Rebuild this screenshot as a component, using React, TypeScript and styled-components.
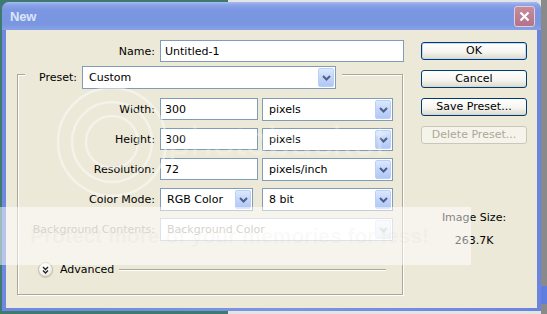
import React from 'react';
import styled, { createGlobalStyle, css } from 'styled-components';

const GlobalStyle = createGlobalStyle`
  html, body {
    margin: 0;
    padding: 0;
    width: 547px;
    height: 314px;
    overflow: hidden;
  }
  body {
    font-family: "DejaVu Sans", Tahoma, sans-serif;
    font-size: 11px;
    color: #000;
  }
`;

const Desktop = styled.div`
  position: relative;
  width: 547px;
  height: 314px;
  box-sizing: border-box;
  padding: 2px 0 0 2px;
  background:
    linear-gradient(180deg, transparent 0, transparent 286px, #5f7ee0 286px, #5f7ee0 304px, transparent 304px) right / 6px 100% no-repeat,
    linear-gradient(90deg, #3e7a70 0, #3e7a70 228px, #e4e4e4 228px, #e4e4e4 541px, #8a8a8a 541px);
`;

const Window = styled.div`
  width: 539px;
  height: 309px;
  box-sizing: border-box;
  display: flex;
  flex-direction: column;
  padding: 0 4px 3px 4px;
  border-radius: 7px 7px 0 0;
  background: linear-gradient(90deg, #6f88e0, #7c95e2 50%, #6a84df);
`;

const TitleBar = styled.div`
  height: 28px;
  display: flex;
  align-items: center;
  justify-content: space-between;
  margin: 0 -4px;
  padding: 0 6px 0 8px;
  border-radius: 7px 7px 0 0;
  background: linear-gradient(180deg, #a6bcf0 0, #8aa3e8 3px, #7b96e2 8px, #7a96e0 22px, #86a1e6 28px);
`;

const Title = styled.span`
  font-family: "Liberation Sans", Arial, sans-serif;
  font-weight: bold;
  font-size: 13px;
  color: #dbe5f9;
  letter-spacing: -0.2px;
`;

const CloseButton = styled.div`
  width: 21px;
  height: 21px;
  box-sizing: border-box;
  border: 1px solid #e6cdd6;
  border-radius: 3px;
  background: linear-gradient(180deg, #c68d9c, #b1738a);
  display: flex;
  align-items: center;
  justify-content: center;
  margin-top: 1px;
`;

const Body = styled.div`
  flex: 1;
  display: flex;
  gap: 17px;
  padding: 10px 0 0 11px;
  background: #ece9d8;
`;

const Main = styled.div`
  width: 387px;
  display: flex;
  flex-direction: column;
`;

const NameRow = styled.div`
  display: grid;
  grid-template-columns: 138px 244px;
  column-gap: 5px;
  align-items: center;
`;

const Label = styled.label<{ $disabled?: boolean }>`
  text-align: right;
  white-space: nowrap;
  color: ${(p) => (p.$disabled ? '#aca899' : '#000')};
`;

const TextInput = styled.input<{ $w: number }>`
  width: ${(p) => p.$w}px;
  height: 22px;
  box-sizing: border-box;
  margin: 0;
  padding: 0 4px;
  border: 1px solid #7f9db9;
  background: #fff;
  font-family: "DejaVu Sans", Tahoma, sans-serif;
  font-size: 11px;
  color: #000;
  outline: none;
`;

const Group = styled.fieldset`
  width: 386px;
  box-sizing: border-box;
  margin: 4px 0 0 0;
  padding: 0;
  border: 1px solid #aca899;
  box-shadow: inset 1px 1px 0 #fff, 1px 1px 0 #fff;
  min-width: 0;
`;

const Legend = styled.legend`
  height: 16px;
  margin-left: 7px;
  padding: 0 6px 0 14px;
  background: #ece9d8;
`;

const LegendInner = styled.div`
  height: 23px;
  display: flex;
  align-items: center;
  gap: 5px;
`;

const FormGrid = styled.div`
  display: grid;
  grid-template-columns: 142px 102px 131px;
  grid-auto-rows: 23px;
  row-gap: 7px;
  margin-top: 16px;
  align-items: start;

  & > ${Label} {
    padding-right: 5px;
    line-height: 23px;
  }
`;

const ComboBox = styled.div<{ $w: number; $disabled?: boolean; $span?: boolean }>`
  width: ${(p) => p.$w}px;
  height: 23px;
  box-sizing: border-box;
  display: flex;
  align-items: center;
  padding: 1px;
  background: #fff;
  border: 1px solid ${(p) => (p.$disabled ? '#b9c7da' : '#7f9db9')};
  color: ${(p) => (p.$disabled ? '#aca899' : '#000')};
  ${(p) =>
    p.$span &&
    css`
      grid-column: span 2;
    `}
`;

const ComboText = styled.span`
  flex: 1;
  padding-left: 5px;
  white-space: nowrap;
  overflow: hidden;
`;

const DropButton = styled.div<{ $disabled?: boolean }>`
  width: 16px;
  height: 19px;
  box-sizing: border-box;
  border: 1px solid ${(p) => (p.$disabled ? '#e4e9f2' : '#bcd0f6')};
  border-radius: 2px;
  display: flex;
  align-items: center;
  justify-content: center;
  background: ${(p) =>
    p.$disabled
      ? 'linear-gradient(180deg, #f4f6fb, #e6ebf5)'
      : 'linear-gradient(180deg, #dce8fe 0%, #c3d5fb 50%, #b1c7f6 100%)'};
`;

const AdvancedRow = styled.div`
  display: flex;
  align-items: center;
  margin-top: 21px;
  padding: 0 16px 17px 20px;
`;

const RoundButton = styled.div`
  width: 15px;
  height: 15px;
  box-sizing: border-box;
  border-radius: 50%;
  border: 1px solid #c2bfb2;
  background: radial-gradient(circle at 40% 35%, #fff 0, #f6f5f0 50%, #d9d6ca 100%);
  box-shadow: 0 1px 1px rgba(0, 0, 0, 0.15);
  display: flex;
  align-items: center;
  justify-content: center;
`;

const AdvancedText = styled.span`
  margin-left: 7px;
`;

const Rule = styled.div`
  flex: 1;
  margin-left: 5px;
  height: 0;
  border-top: 1px solid #aca899;
  border-bottom: 1px solid #fff;
`;

const Side = styled.div`
  width: 106px;
  display: flex;
  flex-direction: column;
  padding-top: 2px;
`;

const ButtonStack = styled.div`
  display: flex;
  flex-direction: column;
  gap: 10px;
`;

const PushButton = styled.button<{ $primary?: boolean }>`
  width: 106px;
  height: 18px;
  box-sizing: border-box;
  margin: 0;
  padding: 0;
  border: 1px solid #003c74;
  border-radius: 3px;
  background: linear-gradient(180deg, #ffffff 0%, #f6f5f0 55%, #e3e0d4 90%, #d6d0c5 100%);
  font-family: "DejaVu Sans", Tahoma, sans-serif;
  font-size: 11px;
  line-height: 16px;
  color: #000;
  ${(p) =>
    p.$primary &&
    css`
      box-shadow: inset 0 0 0 1px #c6d6f5;
    `}

  &:disabled {
    border-color: #c9c7ba;
    color: #aca899;
    background: #f5f4ea;
  }
`;

const SizeInfo = styled.div`
  margin-top: 67px;
  display: flex;
  flex-direction: column;
  align-items: center;
  gap: 10px;
  line-height: 13px;
`;

/* photobucket watermark baked into the screenshot */
const WatermarkBand = styled.div`
  position: absolute;
  left: 0;
  top: 207px;
  width: 471px;
  height: 58px;
  background: rgba(255, 255, 255, 0.5);
  pointer-events: none;
`;

const WatermarkSlogan = styled.div`
  position: absolute;
  left: 30px;
  top: 224px;
  font-family: "Liberation Sans", Arial, sans-serif;
  font-weight: bold;
  font-size: 21px;
  line-height: 24px;
  color: rgba(200, 194, 170, 0.09);
  white-space: nowrap;
  pointer-events: none;
`;

const WatermarkLogo = styled.div`
  position: absolute;
  left: 168px;
  top: 120px;
  font-family: "Liberation Sans", Arial, sans-serif;
  font-size: 40px;
  line-height: 42px;
  color: rgba(255, 255, 255, 0.25);
  white-space: nowrap;
  pointer-events: none;
`;

const WatermarkRings = styled.svg`
  position: absolute;
  left: 50px;
  top: 80px;
  pointer-events: none;
`;

const Chevron = ({ disabled }: { disabled?: boolean }) => (
  <svg width="9" height="6" viewBox="0 0 9 6">
    <polyline
      points="1,1 4.5,4.5 8,1"
      fill="none"
      stroke={disabled ? '#c6cedd' : '#4d6185'}
      strokeWidth="2"
    />
  </svg>
);

const Combo = ({
  value,
  width,
  disabled,
  span,
}: {
  value: string;
  width: number;
  disabled?: boolean;
  span?: boolean;
}) => (
  <ComboBox $w={width} $disabled={disabled} $span={span}>
    <ComboText>{value}</ComboText>
    <DropButton $disabled={disabled}>
      <Chevron disabled={disabled} />
    </DropButton>
  </ComboBox>
);

export default function App() {
  return (
    <Desktop>
      <GlobalStyle />
      <Window>
        <TitleBar>
          <Title>New</Title>
          <CloseButton>
            <svg width="11" height="11" viewBox="0 0 11 11">
              <path d="M1.5 1.5 L9.5 9.5 M9.5 1.5 L1.5 9.5" stroke="#fff" strokeWidth="2.2" />
            </svg>
          </CloseButton>
        </TitleBar>
        <Body>
          <Main>
            <NameRow>
              <Label>Name:</Label>
              <TextInput $w={244} defaultValue="Untitled-1" readOnly />
            </NameRow>
            <Group>
              <Legend>
                <LegendInner>
                  <Label>Preset:</Label>
                  <Combo value="Custom" width={254} />
                </LegendInner>
              </Legend>
              <FormGrid>
                <Label>Width:</Label>
                <TextInput $w={98} defaultValue="300" readOnly />
                <Combo value="pixels" width={131} />

                <Label>Height:</Label>
                <TextInput $w={98} defaultValue="300" readOnly />
                <Combo value="pixels" width={131} />

                <Label>Resolution:</Label>
                <TextInput $w={98} defaultValue="72" readOnly />
                <Combo value="pixels/inch" width={131} />

                <Label>Color Mode:</Label>
                <Combo value="RGB Color" width={93} />
                <Combo value="8 bit" width={131} />

                <Label $disabled>Background Contents:</Label>
                <Combo value="Background Color" width={233} disabled span />
              </FormGrid>
              <AdvancedRow>
                <RoundButton>
                  <svg width="7" height="8" viewBox="0 0 7 8">
                    <polyline points="1,1 3.5,3.5 6,1" fill="none" stroke="#222" strokeWidth="1.4" />
                    <polyline points="1,4.5 3.5,7 6,4.5" fill="none" stroke="#222" strokeWidth="1.4" />
                  </svg>
                </RoundButton>
                <AdvancedText>Advanced</AdvancedText>
                <Rule />
              </AdvancedRow>
            </Group>
          </Main>
          <Side>
            <ButtonStack>
              <PushButton $primary>OK</PushButton>
              <PushButton>Cancel</PushButton>
              <PushButton>Save Preset...</PushButton>
              <PushButton disabled>Delete Preset...</PushButton>
            </ButtonStack>
            <SizeInfo>
              <span>Image Size:</span>
              <span>263.7K</span>
            </SizeInfo>
          </Side>
        </Body>
      </Window>
      <WatermarkRings width="130" height="130" viewBox="0 0 130 130">
        <g fill="none" stroke="rgba(255,255,255,0.45)" strokeWidth="2.5">
          <circle cx="62" cy="62" r="26" />
          <circle cx="62" cy="62" r="40" />
          <circle cx="62" cy="62" r="54" />
        </g>
      </WatermarkRings>
      <WatermarkLogo>photobucket</WatermarkLogo>
      <WatermarkBand />
      <WatermarkSlogan>Protect more of your memories for less!</WatermarkSlogan>
    </Desktop>
  );
}
